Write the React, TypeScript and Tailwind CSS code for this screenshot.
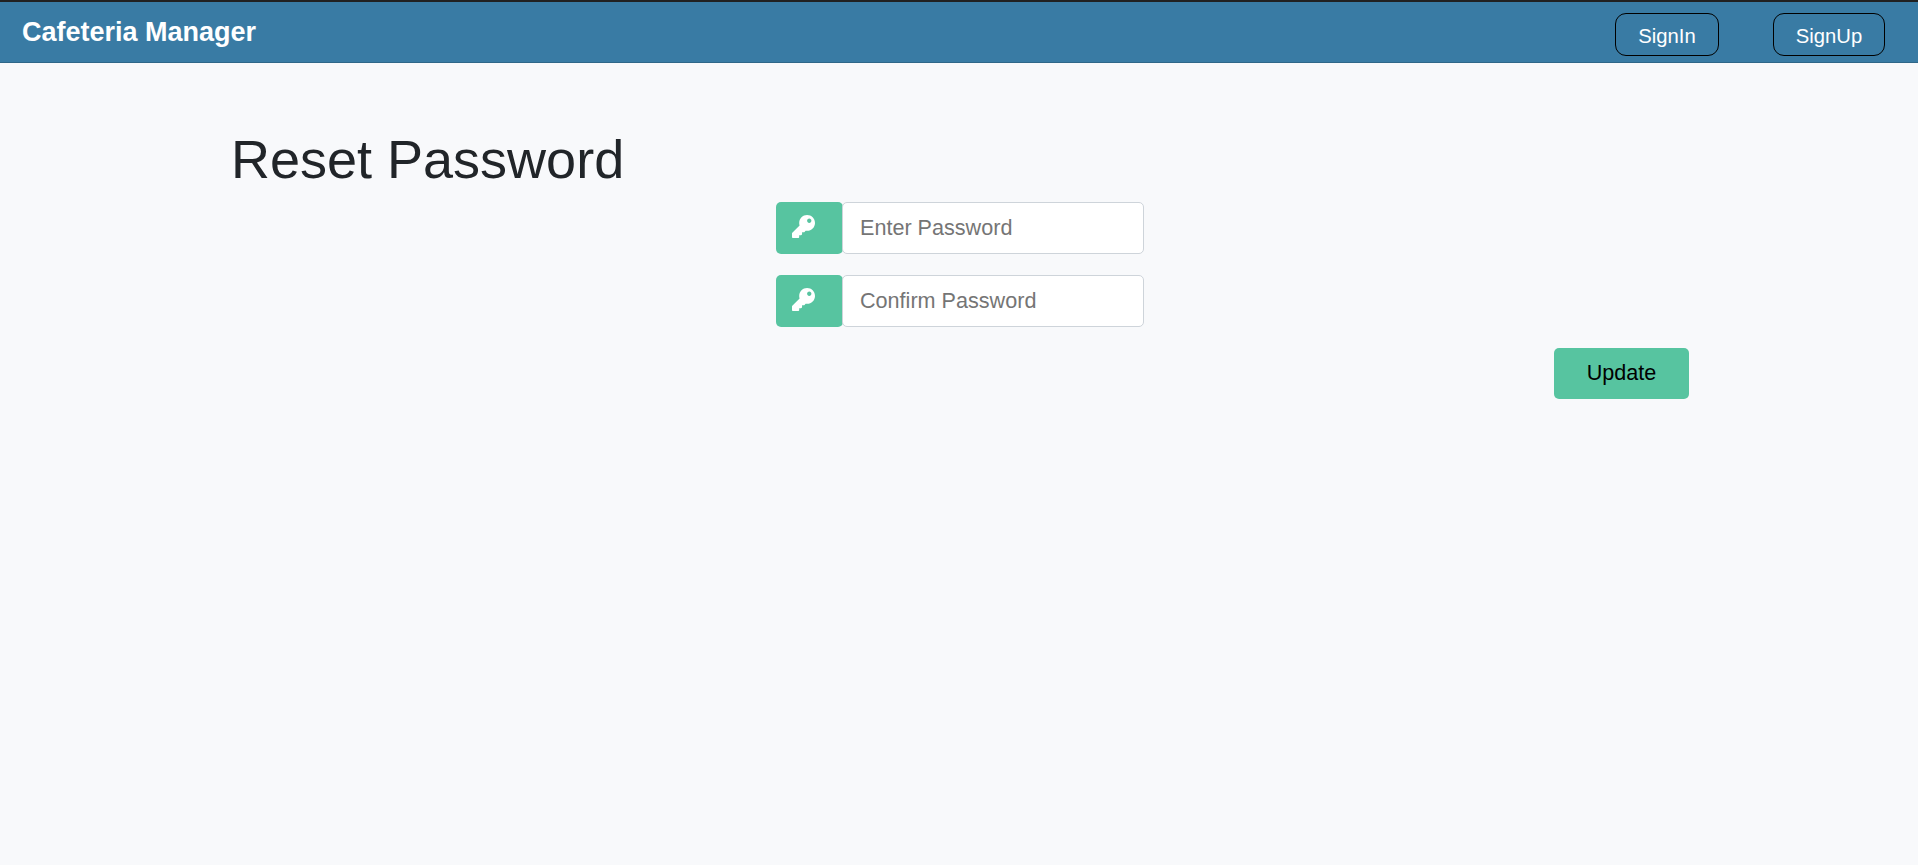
import { FaKey } from "react-icons/fa";

function NavButton({ label, className }: { label: string; className: string }) {
  return (
    <button
      type="button"
      className={`h-[43px] rounded-[11px] border border-black pt-0.5 text-[20.25px] leading-[30px] text-white ${className}`}
    >
      {label}
    </button>
  );
}

function PasswordField({ placeholder }: { placeholder: string }) {
  return (
    <div className="flex h-[52px]">
      <span className="flex w-[67px] shrink-0 items-center rounded-[5px] bg-[#57c4a0] pb-[3px] pl-4 text-white">
        <FaKey className="size-[23px]" />
      </span>
      <input
        type="password"
        placeholder={placeholder}
        className="-ml-px h-full w-[302px] rounded-[5px] border border-[#ced4da] bg-white pr-4 pb-px pl-[17px] text-[21.6px] text-[#495057] outline-none placeholder:text-[#757575]"
      />
    </div>
  );
}

export default function App() {
  return (
    <div className="min-h-screen bg-[#f8f9fb] font-['Liberation_Sans',Arial,sans-serif] text-[#212529]">
      <header className="flex h-[63px] items-start justify-between border-t-2 border-b border-t-[#212121] border-b-[#2f6788] bg-[#397ba4] pr-[33px] pl-[22px]">
        <a href="#" className="pt-[10px] text-[27px] leading-10 font-bold text-white">
          Cafeteria Manager
        </a>
        <nav className="flex gap-[54px] pt-[11px]">
          <NavButton label="SignIn" className="w-[104px]" />
          <NavButton label="SignUp" className="w-[112px]" />
        </nav>
      </header>
      <main className="mx-auto w-[1460px] pt-[64px]">
        <h1 className="pl-0.5 text-[54px] leading-[65px]">Reset Password</h1>
        <form className="mt-[10px]">
          <div className="ml-[547px] flex flex-col gap-[21px]">
            <PasswordField placeholder="Enter Password" />
            <PasswordField placeholder="Confirm Password" />
          </div>
          <div className="mt-[21px] flex justify-end">
            <button
              type="button"
              className="h-[51px] w-[135px] rounded-[5px] bg-[#57c4a0] text-[21.6px] text-black"
            >
              Update
            </button>
          </div>
        </form>
      </main>
    </div>
  );
}
